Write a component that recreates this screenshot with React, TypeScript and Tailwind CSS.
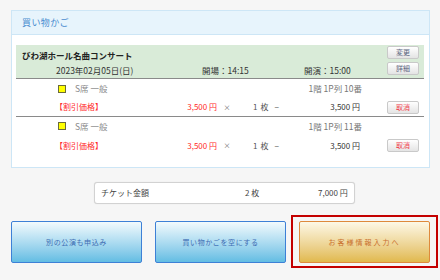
import React from 'react';

interface Ticket {
  seat: string;
  label: string;
  price: string;
  count: number;
  subtotal: string;
}

const tickets: Ticket[] = [
  { seat: '1階 1P列 10番', label: 'S席 一般', price: '3,500 円', count: 1, subtotal: '3,500 円' },
  { seat: '1階 1P列 11番', label: 'S席 一般', price: '3,500 円', count: 1, subtotal: '3,500 円' },
];

const SmallButton: React.FC<{ label: string; danger?: boolean }> = ({ label, danger }) => (
  <button
    className={`w-[32px] h-[13px] flex items-center justify-center rounded-[2px] border border-[#c9c9c9] bg-gradient-to-b from-white to-[#e4e4e4] text-[7px] leading-none ${
      danger ? 'text-[#f03a4a]' : 'text-[#5b6680]'
    }`}
  >
    {label}
  </button>
);

const App: React.FC = () => {
  return (
    <div
      className="w-[440px] h-[280px] bg-[#f6f6f6] pt-[10px] overflow-hidden"
      style={{ fontFamily: '"Noto Sans CJK JP", "Noto Sans", sans-serif' }}
    >
      {/* Cart card */}
      <div className="ml-[11px] w-[419px] border border-[#cde6f6] bg-white">
        <div className="h-[24px] bg-[#e7f4fc] border-b border-[#cde6f6] pl-[10px] flex items-center text-[9px] tracking-[0.4px] text-[#4a8cd0]">
          買い物かご
        </div>

        <div className="pl-[4px] pr-[5px] pt-[10px] pb-[11px]">
          {/* Event header */}
          <div className="h-[34px] bg-[#d9ebd8] border-b border-[#8a8a8a] flex">
            <div className="flex-1 pl-[6px] pt-[3px]">
              <div className="text-[8.5px] font-bold text-[#222] leading-[14px]">びわ湖ホール名曲コンサート</div>
              <div className="flex text-[8.5px] text-[#333] leading-[15px] mt-[1px]">
                <span className="ml-[34px] w-[146px]">2023年02月05日(日)</span>
                <span className="w-[102px]">開場：14:15</span>
                <span>開演：15:00</span>
              </div>
            </div>
            <div className="w-[37px] flex flex-col gap-[3px] pt-[1px]">
              <SmallButton label="変更" />
              <SmallButton label="詳細" />
            </div>
          </div>

          {/* Ticket rows */}
          {tickets.map((t, i) => (
            <div key={i} className={i === 0 ? 'border-b border-[#8a8a8a]' : ''}>
              <div className={`${i === 0 ? 'h-[19px]' : 'h-[18px]'} flex items-center text-[8.5px]`}>
                <span className="ml-[42px] w-[8px] h-[8px] bg-[#ffff00] border border-[#6b6b3a]" />
                <span className="ml-[9px] text-[#888]">{t.label}</span>
                <span className="ml-auto text-[#777]">{t.seat}</span>
                <span className="w-[62px]" />
              </div>
              <div className={`${i === 0 ? 'h-[18px]' : 'h-[21px]'} flex items-center text-[8px]`}>
                <div className="w-[201px] pl-[39px] flex justify-between text-[#ff2a2a]">
                  <span>【割引価格】</span>
                  <span>{t.price}</span>
                </div>
                <span className="w-[20px] text-center text-[7px] text-[#666]">×</span>
                <span className="w-[70px] pl-[16px] flex items-center text-[#555]">
                  <span>{t.count}</span>
                  <span className="ml-[3px]">枚</span>
                  <span className="ml-[6px]">−</span>
                </span>
                <span className="w-[53px] text-right text-[#333]">{t.subtotal}</span>
                <span className="ml-[27px]">
                  <SmallButton label="取消" danger />
                </span>
              </div>
            </div>
          ))}
        </div>
      </div>

      {/* Totals */}
      <div className="mt-[14px] ml-[94px] w-[261px] h-[22px] rounded-[3px] border border-[#d2d2d2] bg-white shadow-[0_0_1px_rgba(0,0,0,0.15)] flex items-center text-[8px] text-[#444]">
        <span className="pl-[6px] w-[150px]">チケット金額</span>
        <span className="w-[73px]">2 枚</span>
        <span>7,000 円</span>
      </div>

      {/* Action buttons */}
      <div className="mt-[11px] flex items-start">
        <button className="mt-[6px] ml-[11px] w-[131px] h-[42px] rounded-[2px] border border-[#3d80d6] bg-gradient-to-b from-[#f2fafd] to-[#62bde3] text-[7px] tracking-[0.6px] text-[#3e6db3]">
          別の公演も申込み
        </button>
        <button className="mt-[6px] ml-[13px] w-[131px] h-[42px] rounded-[2px] border border-[#3d80d6] bg-gradient-to-b from-[#f2fafd] to-[#62bde3] text-[7px] tracking-[0.6px] text-[#3e6db3]">
          買い物かごを空にする
        </button>
        <div className="ml-[5px] border-2 border-[#c40000] pt-[4px] pb-[3px] px-[6px]">
          <button className="w-[131px] h-[42px] rounded-[2px] border border-[#de8a3c] bg-gradient-to-b from-[#fdf8e6] to-[#e1b94c] text-[7px] tracking-[2px] text-[#c96f2b]">
            お客様情報入力へ
          </button>
        </div>
      </div>
    </div>
  );
};

export default App;
